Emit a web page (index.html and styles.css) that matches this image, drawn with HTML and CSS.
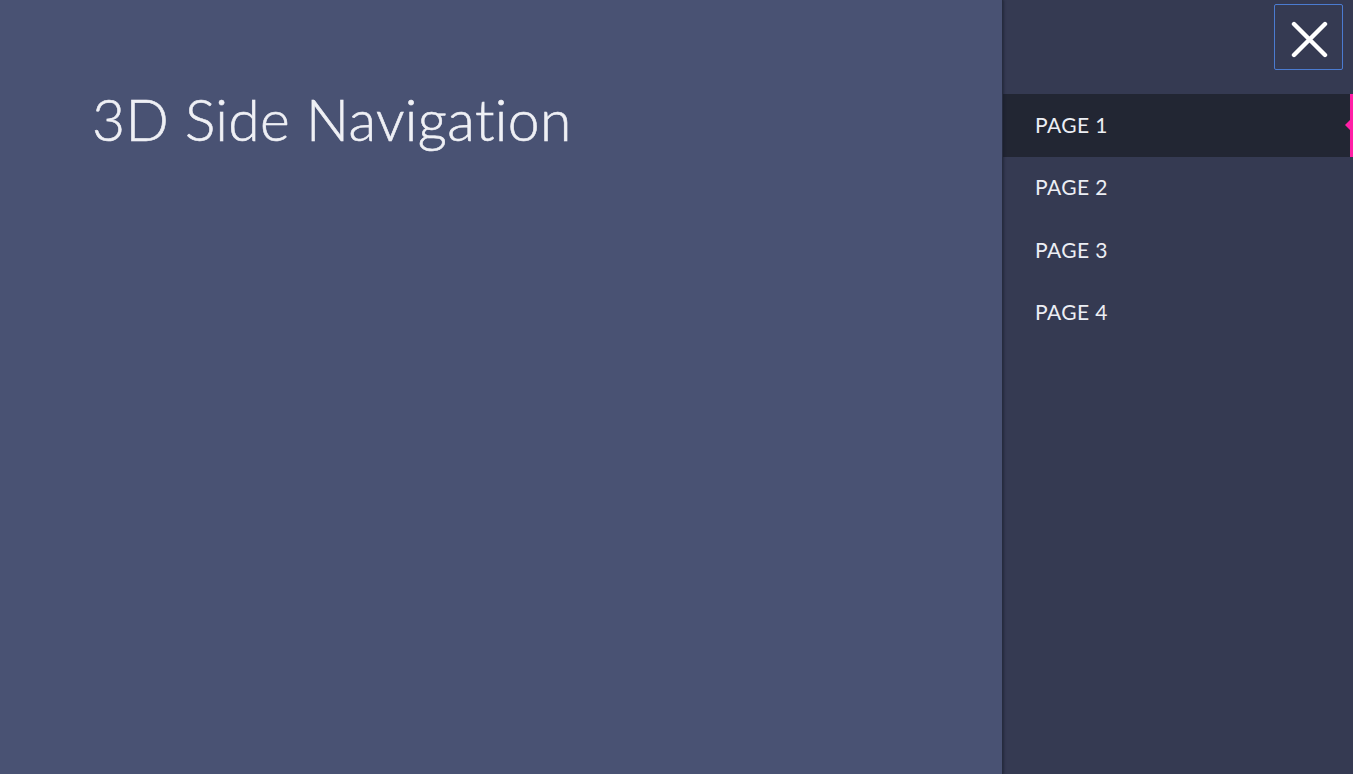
FILE: index.html
```html
<!DOCTYPE html>
<html>
<head>
<meta charset="utf-8">
<link rel="stylesheet" href="styles.css">
</head>
<body>
<div class="app">
  <main class="main">
    <h1 class="title">3D Side Navigation</h1>
  </main>
  <aside class="sidebar">
    <div class="sidebar-head">
      <button class="close-btn" aria-label="Close">
        <svg width="37" height="37" viewBox="0 0 37 37"><path d="M3 3 L34 34 M34 3 L3 34" stroke="#ffffff" stroke-width="4.4" stroke-linecap="round" fill="none"/></svg>
      </button>
    </div>
    <nav class="nav">
      <a class="nav-item active">PAGE 1</a>
      <a class="nav-item">PAGE 2</a>
      <a class="nav-item">PAGE 3</a>
      <a class="nav-item">PAGE 4</a>
    </nav>
  </aside>
</div>
</body>
</html>
```
FILE: styles.css
```css
html, body {
  margin: 0;
  padding: 0;
  height: 100%;
}
body {
  font-family: Lato, "Open Sans", sans-serif;
  background: #353a52;
  overflow: hidden;
  font-variant-ligatures: none;
}
.app {
  display: flex;
  height: 774px;
}
.main {
  flex: 1;
  background: #495273;
  padding: 83px 0 0 92px;
  border-right: 1px solid #262b3e;
  box-shadow: 1px 0 2px rgba(20, 24, 40, 0.5);
  position: relative;
  z-index: 1;
}
.title {
  margin: 0;
  font-weight: 300;
  font-size: 57px;
  line-height: 72px;
  letter-spacing: 0.35px;
  color: #eff0f5;
  -webkit-text-stroke: 0.6px #eff0f5;
  font-variant-ligatures: none;
}
.sidebar {
  width: 350px;
  background: #353a52;
  display: flex;
  flex-direction: column;
}
.sidebar-head {
  height: 94px;
  display: flex;
  justify-content: flex-end;
  align-items: flex-start;
  padding: 4px 10px 0 0;
  box-sizing: border-box;
}
.close-btn {
  width: 69px;
  height: 66px;
  background: transparent;
  border: 1px solid #4b7bd0;
  border-radius: 2px;
  display: flex;
  align-items: center;
  justify-content: center;
  padding: 4px 0 0 1px;
  margin: 0;
  box-sizing: border-box;
}
.nav {
  display: flex;
  flex-direction: column;
}
.nav-item {
  height: 62.5px;
  display: flex;
  align-items: center;
  padding-left: 32px;
  padding-bottom: 2px;
  box-sizing: border-box;
  font-size: 21px;
  font-weight: 400;
  letter-spacing: 0.4px;
  color: #eceef4;
  position: relative;
}
.nav-item.active {
  background: #222633;
  box-shadow: inset -3px 0 0 #ff1fa6;
}
.nav-item.active::after {
  content: "";
  position: absolute;
  right: 3px;
  top: 50%;
  margin-top: -5px;
  border-style: solid;
  border-width: 5px 5px 5px 0;
  border-color: transparent #ff1fa6 transparent transparent;
}
```
